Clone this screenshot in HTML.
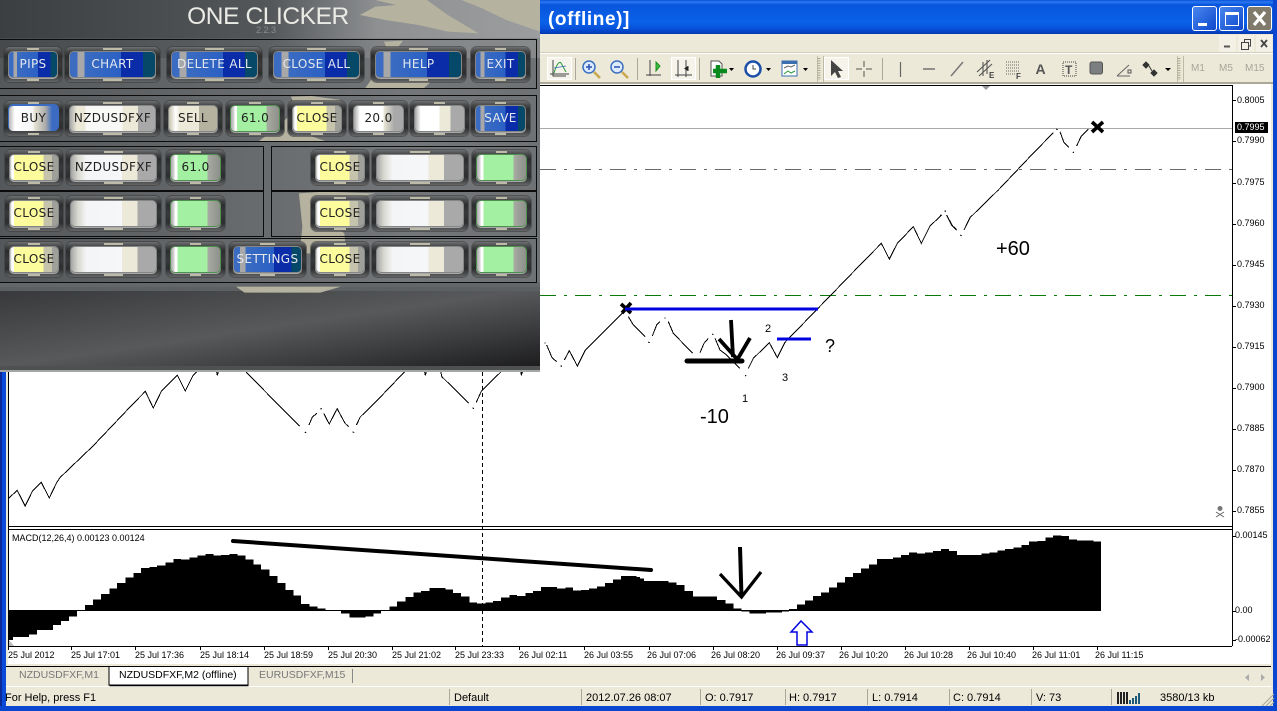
<!DOCTYPE html>
<html><head><meta charset="utf-8"><style>
html,body{margin:0;padding:0;width:1277px;height:711px;overflow:hidden;background:#fff}
body{position:relative;font-family:"Liberation Sans",sans-serif}
div,span{position:absolute;box-sizing:border-box}
#panel{left:0;top:0;width:540px;height:372px;overflow:hidden;background:linear-gradient(90deg,#55585a 0,#65686a 40%,#74777a 75%,#6f7274 100%);border-bottom:2px solid #a5a7a5}
.box{border:1px solid #0c0c0c}
.b{height:35px;border-radius:6px;background:linear-gradient(#6e7071 0,#464849 12%,#2b2d2e 26%,#37393a 50%,#2b2d2e 76%,#484a4b 90%,#646667 100%);box-shadow:0 0 0 1px rgba(60,60,60,.6)}
.b:before,.b:after{content:"";position:absolute;left:40%;width:20%;height:2px;background:#bdbaa8}
.b:before{top:1px}.b:after{bottom:1px}
.i{left:5px;right:5px;top:5px;bottom:5px;border-radius:4px;font:12px/25px "DejaVu Sans",sans-serif;letter-spacing:.35px;text-align:center;color:#222;white-space:nowrap;box-shadow:0 0 0 1px #858787,0 1px 0 1px #a8a8a8}
.blue .i{color:#e4e8ee;background:linear-gradient(90deg,#3b6cc2 0,#3b6cc2 9%,#a8a8a8 9%,#a8a8a8 17%,#3b6cc2 17%,#2b60c4 60%,#0a2ca8 60%,#0a2ca8 86%,#064868 86%)}
.wh .i{background:linear-gradient(90deg,#a5a5a5 0,#d8d8d0 8%,#f4f5f6 18%,#f6f7f8 60%,#ece9d8 60%,#ece9d8 78%,#a9a9a9 78%)}
.yl .i{background:linear-gradient(90deg,#b8b8b0 0,#fff 4%,#fff 8%,#fdfc9c 8%,#fdfc9c 70%,#c6c3ad 70%,#c6c3ad 88%,#a0a09a 88%)}
.gr .i{box-shadow:0 0 0 1px #4f8f4f,0 1px 0 1px #a8a8a8;background:linear-gradient(90deg,#aaa 0,#ddd 7%,#fff 8%,#fff 13%,#a3f0a3 13%,#a3f0a3 74%,#a8aca2 74%,#8e908a 100%)}
.t{font-size:9px;color:#000;white-space:nowrap;line-height:11px}
.s{font-size:11px;color:#000;white-space:nowrap;line-height:13px}
.tb{color:#a6a69a;font-size:10px;line-height:12px;top:63px}
.w{background:#0b56dc;border:1px solid #fff;border-radius:3px}
</style></head><body>

<!-- window chrome -->
<div style="left:540px;top:0;width:737px;height:34px;background:linear-gradient(#0a50d8 0,#2a78f0 6%,#0855dd 14%,#0a5ce4 45%,#0a62ea 65%,#0850d8 85%,#0338b0 100%)"></div>
<div style="left:548px;top:8px;font:bold 19px/24px 'Liberation Sans',sans-serif;letter-spacing:.6px;color:#fff;white-space:nowrap">(offline)]</div>
<div class="w" style="left:1192px;top:6px;width:25px;height:25px;background:linear-gradient(135deg,#4a86ee,#0c48cc)"><span style="left:5px;top:16px;width:9px;height:3px;background:#fff"></span></div>
<div class="w" style="left:1219px;top:6px;width:25px;height:25px;background:linear-gradient(135deg,#4a86ee,#0c48cc)"><span style="left:5px;top:5px;width:14px;height:14px;border:1px solid #fff;border-top:3px solid #fff"></span></div>
<div class="w" style="left:1247px;top:6px;width:25px;height:25px;background:#7f7a6c"><svg style="position:absolute;left:0;top:0" width="23" height="23"><path d="M6 5L17 18M17 5L6 18" stroke="#fff" stroke-width="3.2" fill="none"/></svg></div>

<div style="left:540px;top:34px;width:737px;height:50px;background:#ece9d8"></div>
<div style="left:540px;top:52px;width:737px;height:1px;background:#cfcdbb"></div>
<div style="left:540px;top:53px;width:737px;height:1px;background:#fff"></div>
<div style="left:540px;top:82px;width:737px;height:2px;background:#aca899"></div>
<div style="left:1219px;top:35px;width:17px;height:17px;background:#f3f1e6"></div>
<div style="left:1238px;top:35px;width:16px;height:17px;background:#f3f1e6"></div>
<div style="left:1256px;top:35px;width:16px;height:17px;background:#f3f1e6"></div>

<!-- toggled toolbar buttons -->
<div style="left:547px;top:57px;width:25px;height:23px;background:#f5f3ea;border:1px solid #fff"></div>
<div style="left:671px;top:57px;width:25px;height:23px;background:#f5f3ea;border:1px solid #fff"></div>
<div style="left:824px;top:57px;width:25px;height:23px;background:#f5f3ea;border:1px solid #fff"></div>
<div class="tb" style="left:1191px">M1</div>
<div class="tb" style="left:1219px">M5</div>
<div class="tb" style="left:1245px">M15</div>

<svg style="position:absolute;left:0;top:0" width="1277" height="711">
 <!-- mdi buttons -->
 <path d="M1224 46.500H1230" stroke="#555" stroke-width="2"/>
 <path d="M1241.500 42.500H1248.500V49.500H1241.500ZM1244.500 42V39.500H1250.500V46H1249" fill="none" stroke="#444"/>
 <path d="M1261 40L1267 47M1267 40L1261 47" stroke="#444" stroke-width="1.800" fill="none"/>
 <!-- toolbar separators -->
 <g stroke="#aca899" stroke-width="1">
  <path d="M575.5 58V80M637.5 58V80M699.5 58V80M882.5 58V80"/>
  <path d="M817.5 56V82M823.5 56V82M1177.5 56V82M1183.5 56V82" stroke="#bdbaa9"/>
 </g>
 <path d="M819 58V80M1179 58V80" stroke="#a9a692" stroke-width="3" stroke-dasharray="1 1.4"/>
 <!-- toolbar icons -->
 <path d="M553 60V76H566" stroke="#444" fill="none"/><path d="M550 74H569" stroke="#444"/><path d="M554 73Q558 60 561 63L566 72" stroke="#2a9a3a" fill="none"/><path d="M554 68L566 66" stroke="#3a70c0" stroke-width=".7"/>
 <g fill="#dcebff" stroke="#3b6fc0" stroke-width="1.5"><circle cx="589" cy="67" r="6"/><circle cx="617" cy="67" r="6"/></g>
 <path d="M594 72L600 78M622 72L628 78" stroke="#c9a850" stroke-width="2.6"/>
 <path d="M586 67H592M589 64V70M614 67H620" stroke="#2a50b0" stroke-width="1.5"/>
 <path d="M650 60V76M646 75H661" stroke="#444" fill="none"/><path d="M656 62V71L660 66Z" fill="#3fbf3f" stroke="#1c8a1c"/>
 <path d="M678 60V77M686 60V77M675 75H692" stroke="#444" fill="none"/><path d="M688 66V71" stroke="#222" stroke-width="1"/><path d="M684 68.500L688 66V71Z" fill="#222"/>
 <path d="M711 61H719L722 64V76H711Z" fill="#fff" stroke="#555"/><path d="M713 71H727M718 65V78" stroke="#0a8a1c" stroke-width="4.500"/>
 <circle cx="753" cy="69" r="7.500" fill="#fff" stroke="#1c4fa8" stroke-width="2.500"/><path d="M753 65V69H756" stroke="#444" fill="none"/>
 <rect x="782" y="61" width="15" height="15" fill="#fff" stroke="#3a70b0"/><path d="M782 62.500H797" stroke="#3a70b0" stroke-width="3"/><path d="M784 68L788 66L791 67L795 65" stroke="#666" fill="none"/><path d="M784 74L788 71L791 73L795 71" stroke="#2a9a3a" fill="none"/>
 <path d="M729 68H734L731.500 71Z M766 68H771L768.500 71Z M803 68H808L805.500 71Z M1165 68H1171L1168 71Z"/>
 <path d="M831 60L831 76L835 72L838 78L841 77L838 71L843 71Z" fill="#444"/>
 <path d="M864 61V67M864 71V77M856 69H862M866 69H872" stroke="#555"/>
 <path d="M900.500 62V77" stroke="#666" stroke-width="1.200"/>
 <path d="M923 69H935" stroke="#555" stroke-width="1.200"/>
 <path d="M951 76L963 62" stroke="#777" stroke-width="1.500"/>
 <path d="M977 72L990 60M979 76L992 64M983 62V76M987 60V74" stroke="#555" fill="none" stroke-width="1.100"/>
 <text x="989" y="78" font-size="8" font-weight="bold" fill="#444">E</text>
 <path d="M1006 62H1019M1006 65H1019M1006 68H1019M1006 71H1019M1006 74H1016" stroke="#666" stroke-dasharray="1 1"/>
 <text x="1016" y="79" font-size="8" font-weight="bold" fill="#444">F</text>
 <text x="1035.500" y="74" font-size="14" font-weight="bold" fill="#555">A</text>
 <rect x="1063" y="62" width="13" height="14" fill="none" stroke="#444" stroke-dasharray="1 1"/>
 <text x="1065" y="74" font-size="12" font-weight="bold" fill="#555">T</text>
 <rect x="1090" y="62" width="12.500" height="12" rx="2" fill="#7b7f82" stroke="#555"/>
 <path d="M1117 76H1130M1117 76L1129 65" stroke="#666" fill="none"/><rect x="1128" y="70" width="3" height="3" fill="none" stroke="#555"/>
 <path d="M1146 62L1149 65L1146 68L1143 65ZM1154 70L1157 73L1154 76L1151 73ZM1149 66L1152 71" fill="#333" stroke="#333"/>
 <path d="M981 85H991L986 90Z" fill="#9a9a9a"/>

 <!-- chart frame -->
 <rect x="0" y="372" width="6" height="339" fill="#0a4ad8"/><rect x="0" y="372" width="2" height="339" fill="#0a2a9a"/>
 <rect x="6" y="372" width="2" height="339" fill="#ece9d8"/>
 <rect x="1271" y="84" width="2" height="627" fill="#ece9d8"/>
 <rect x="1273" y="0" width="4" height="711" fill="#0a46d0"/>
 <rect x="540" y="85" width="692" height="1" fill="#000"/>
 <rect x="1232" y="85" width="1" height="561" fill="#000"/>
 <rect x="8" y="372" width="1" height="274" fill="#000"/>
 <rect x="8" y="526" width="1224" height="1" fill="#000"/>
 <rect x="8" y="529" width="1224" height="1" fill="#000"/>
 <rect x="8" y="646" width="1224" height="1" fill="#000"/>

 <!-- level lines -->
 <rect x="540" y="128" width="692" height="1" fill="#a8a8a8"/>
 <path d="M540 169.500H1232" stroke="#6a6a6a" stroke-dasharray="16 8 3 8"/>
 <path d="M540 295.500H1232" stroke="#0a7a0a" stroke-dasharray="16 8 3 8"/>
 <path d="M482.500 372V646" stroke="#000" stroke-dasharray="4 3"/>

 <!-- price line, lower left -->
 <g fill="none" stroke="#000" shape-rendering="crispEdges">
 <g transform="translate(0,370) scale(.34439,.33333)">
  <polyline vector-effect="non-scaling-stroke" points="25,385 50,361 73,408 95,362 120,337 143,384 165,337 175,322 270,228 385,103 422,64 445,114 469,63 515,16 538,63 560,17 571,5"/>
  <polyline vector-effect="non-scaling-stroke" points="629,5 631,16 634,5"/>
  <polyline vector-effect="non-scaling-stroke" points="714,5 800,96 870,168"/>
  <polyline vector-effect="non-scaling-stroke" points="885,186 889,188"/>
  <polyline vector-effect="non-scaling-stroke" points="897,165 907,141 920,130"/>
  <polyline vector-effect="non-scaling-stroke" points="930,117 935,116"/>
  <polyline vector-effect="non-scaling-stroke" points="940,130 956,162 979,116 1002,160 1012,170"/>
  <polyline vector-effect="non-scaling-stroke" points="1024,185 1028,188"/>
  <polyline vector-effect="non-scaling-stroke" points="1035,165 1046,141 1087,100 1175,5"/>
  <polyline vector-effect="non-scaling-stroke" points="1233,5 1235,16 1238,5"/>
  <polyline vector-effect="non-scaling-stroke" points="1280,5 1283,20 1362,100"/>
  <polyline vector-effect="non-scaling-stroke" points="1372,113 1376,116"/>
  <polyline vector-effect="non-scaling-stroke" points="1383,97 1398,63 1455,5"/>
  <polyline vector-effect="non-scaling-stroke" points="1512,5 1514,16 1517,5"/>
 </g>
 <!-- price line, middle (zoom 4 coords) -->
 <g transform="translate(540,90) scale(.33333)">
  <polyline vector-effect="non-scaling-stroke" points="13,758 17,760"/>
  <polyline vector-effect="non-scaling-stroke" points="20,765 36,803 50,815"/>
  <polyline vector-effect="non-scaling-stroke" points="62,827 66,829"/>
  <polyline vector-effect="non-scaling-stroke" points="73,810 88,782 112,828 135,782 172,745 250,667"/>
  <polyline vector-effect="non-scaling-stroke" points="265,680 280,705 315,740"/>
  <polyline vector-effect="non-scaling-stroke" points="325,756 329,758"/>
  <polyline vector-effect="non-scaling-stroke" points="337,738 350,705 360,695"/>
  <polyline vector-effect="non-scaling-stroke" points="373,683 377,685"/>
  <polyline vector-effect="non-scaling-stroke" points="385,695 400,730 458,790"/>
  <polyline vector-effect="non-scaling-stroke" points="480,788 492,760 505,745"/>
  <polyline vector-effect="non-scaling-stroke" points="516,732 520,734"/>
  <polyline vector-effect="non-scaling-stroke" points="525,745 540,780 560,795 600,835"/>
  <polyline vector-effect="non-scaling-stroke" points="615,856 619,858"/>
  <polyline vector-effect="non-scaling-stroke" points="625,835 640,805 688,758 712,803 735,757 870,618 965,520 1024,460 1048,507 1072,460 1120,410 1144,460 1170,408 1205,375"/>
  <polyline vector-effect="non-scaling-stroke" points="1214,362 1218,364"/>
  <polyline vector-effect="non-scaling-stroke" points="1225,385 1238,408 1250,418"/>
 </g>
 <!-- price line, right (zoom 5 coords) -->
 <g transform="translate(940,90) scale(.33333)">
  <polyline vector-effect="non-scaling-stroke" points="0,375 4,377"/>
  <polyline vector-effect="non-scaling-stroke" points="13,362 17,364"/>
  <polyline vector-effect="non-scaling-stroke" points="20,375 36,407 50,420"/>
  <polyline vector-effect="non-scaling-stroke" points="61,435 65,437"/>
  <polyline vector-effect="non-scaling-stroke" points="72,420 90,383 175,300 268,202 340,128"/>
  <polyline vector-effect="non-scaling-stroke" points="349,117 353,119"/>
  <polyline vector-effect="non-scaling-stroke" points="360,125 372,158 387,172"/>
  <polyline vector-effect="non-scaling-stroke" points="398,186 402,188"/>
  <polyline vector-effect="non-scaling-stroke" points="410,168 423,140 445,118"/>
 </g>
 </g>

 <!-- hand drawn -->
 <path d="M621 304L631 313M631 303L622 313" stroke="#000" stroke-width="3.600" fill="none"/>
 <path d="M1092 122L1103 132M1103 122L1092 132" stroke="#000" stroke-width="3.600" fill="none"/>
 <path d="M625 309H818" stroke="#0000e0" stroke-width="3"/>
 <path d="M777 339H811" stroke="#0000e0" stroke-width="3"/>
 <path d="M687 361H742" stroke="#000" stroke-width="5" stroke-linecap="round"/>
 <path d="M731 320L733 357M719 339L737 359M750 338L737 360" stroke="#000" stroke-width="3.800" fill="none"/>
 <path d="M233 541L651 570" stroke="#000" stroke-width="4" stroke-linecap="round"/>
 <path d="M740 547L741.500 597" stroke="#000" stroke-width="4"/>
 <path d="M720 574L741.500 597L761 572" stroke="#000" stroke-width="3.200" fill="none"/>

 <!-- MACD -->
 <rect x="8" y="610" width="1093" height="1" fill="#000"/>
 <g transform="translate(0,525) scale(.40816,.33333)" shape-rendering="crispEdges">
 <path d="M20,258V345H32V336H71V328H91V315H130V300H150V288H169V275H189V258H208V240H228V224H248V207H268V190H287V174H307V158H327V144H346V129H366V126H385V122H405V113H425V102H444V103H464V97H484V91H503V87H523V92H542V90H562V87H582V92H602V104H621V118H640V133H660V153H680V174H699V195H719V212H738V237H758V244H778V250H797V258H836V266H856V277H895V275H915V266H934V258H954V244H973V229H993V216H1013V202H1032V198H1052V189H1091V193H1110V204H1130V214H1150V232H1169V235H1189V232H1208V228H1228V218H1248V210H1267V213H1287V204H1306V198H1326V186H1365V190H1385V188H1404V197H1424V195H1443V190H1463V185H1482V174H1502V163H1521V153H1560V156H1568V258Z"/>
 </g>
 <g transform="translate(640,525) scale(.40625,.33333)" shape-rendering="crispEdges">
 <path d="M0,258V160H10V168H70V172H90V180H110V198H130V214H190V225H210V235H230V250H250V260H270V266H310V262H350V260H367V252H386V238H406V226H426V213H445V202H465V187H485V172H505V156H524V144H544V130H564V118H583V102H623V97H642V90H662V83H682V85H701V83H721V78H741V72H760V78H780V90H840V86H860V82H880V77H899V72H919V67H939V60H958V50H978V48H998V38H1017V31H1037V33H1056V44H1076V47H1116V50H1135V258Z"/>
 </g>
 <path d="M801 621L791 632H797V645H807V632H812Z" fill="#fff" stroke="#0000e0" stroke-width="1.500"/>
 <path d="M9 646L9 640L14 646Z" fill="#bbb"/>

 <!-- price axis ticks -->
 <path d="M1232 100.500H1236M1232 141.500H1236M1232 183.500H1236M1232 224.500H1236M1232 265.500H1236M1232 306.500H1236M1232 347.500H1236M1232 388.500H1236M1232 429.500H1236M1232 470.500H1236M1232 511.500H1236M1232 536.500H1236M1232 611.500H1236M1232 640.500H1236" stroke="#000"/>
 <!-- time ticks -->
 <path d="M8.500 646V650M71.500 646V650M135.500 646V650M200.500 646V650M264.500 646V650M328.500 646V650M392.500 646V650M455.500 646V650M519.500 646V650M584.500 646V650M649.500 646V650M713.500 646V650M777.500 646V650M841.500 646V650M905.500 646V650M969.500 646V650M1033.500 646V650M1097.500 646V650" stroke="#000"/>
 <!-- skull -->
 <circle cx="1220" cy="508.500" r="2.500" fill="#777"/><path d="M1216 512L1224 517M1224 512L1216 517" stroke="#666" fill="none"/>

 <!-- beige bottom -->
 <rect x="8" y="664" width="1263" height="2" fill="#ece9d8"/>
 <rect x="6" y="666" width="1265" height="40" fill="#ece9d8"/>
 <rect x="6" y="666" width="1265" height="1" fill="#000"/>
 <rect x="6" y="686" width="1265" height="1" fill="#fff"/>
 <rect x="0" y="706" width="1277" height="5" fill="#0a46d0"/>
 <path d="M109 667V685H248V667" fill="#fff" stroke="#000"/>
 <path d="M109.500 685.500H248.500" stroke="#000" stroke-width="1.500"/>
 <path d="M352.500 669V683" stroke="#888"/>
 <path d="M1249 674V681L1245 677.500ZM1261 674V681L1265 677.500Z" fill="#aaa"/>
 <!-- status separators -->
 <path d="M449.500 689V705M581.500 689V705M700.500 689V705M785.500 689V705M867.500 689V705M949.500 689V705M1031.500 689V705M1111.500 689V705" stroke="#aca899"/>
 <!-- connection bars -->
 <g shape-rendering="crispEdges">
  <path d="M1117 692H1119V704H1117ZM1120 692H1122V704H1120ZM1123 692H1125V704H1123ZM1126 692H1128V704H1126Z" fill="#222"/>
  <path d="M1129 700H1131V704H1129ZM1132 698H1134V704H1132ZM1135 696H1137V704H1135ZM1138 693H1140V704H1138Z" fill="#1c5a7a"/>
 </g>
 <path d="M1274 694L1262 706M1274 698L1266 706M1274 702L1270 706" stroke="#a8a595" fill="none"/>
</svg>

<!-- axis labels -->
<div class="t" style="left:1237px;top:95px">0.8005</div>
<div style="left:1235px;top:122px;width:33px;height:11px;background:#000"></div>
<div class="t" style="left:1237px;top:122px;color:#fff">0.7995</div>
<div class="t" style="left:1237px;top:135px">0.7990</div>
<div class="t" style="left:1237px;top:177px">0.7975</div>
<div class="t" style="left:1237px;top:218px">0.7960</div>
<div class="t" style="left:1237px;top:259px">0.7945</div>
<div class="t" style="left:1237px;top:300px">0.7930</div>
<div class="t" style="left:1237px;top:341px">0.7915</div>
<div class="t" style="left:1237px;top:382px">0.7900</div>
<div class="t" style="left:1237px;top:423px">0.7885</div>
<div class="t" style="left:1237px;top:464px">0.7870</div>
<div class="t" style="left:1237px;top:505px">0.7855</div>
<div class="t" style="left:1235px;top:530px">0.00145</div>
<div class="t" style="left:1235px;top:605px">0.00</div>
<div class="t" style="left:1235px;top:634px">-0.00062</div>

<!-- annotations -->
<div class="t" style="left:12px;top:533px">MACD(12,26,4) 0.00123 0.00124</div>
<div style="left:700px;top:406px;font-size:20px;line-height:23px">-10</div>
<div style="left:996px;top:238px;font-size:20px;line-height:23px">+60</div>
<div style="left:825px;top:336px;font-size:18px;line-height:20px">?</div>
<div class="s" style="left:765px;top:323px">2</div>
<div class="s" style="left:782px;top:372px">3</div>
<div class="s" style="left:742px;top:393px">1</div>

<!-- time labels -->
<div class="t" style="left:8px;top:650px">25 Jul 2012</div>
<div class="t" style="left:71px;top:650px">25 Jul 17:01</div>
<div class="t" style="left:135px;top:650px">25 Jul 17:36</div>
<div class="t" style="left:200px;top:650px">25 Jul 18:14</div>
<div class="t" style="left:264px;top:650px">25 Jul 18:59</div>
<div class="t" style="left:328px;top:650px">25 Jul 20:30</div>
<div class="t" style="left:392px;top:650px">25 Jul 21:02</div>
<div class="t" style="left:455px;top:650px">25 Jul 23:33</div>
<div class="t" style="left:519px;top:650px">26 Jul 02:11</div>
<div class="t" style="left:584px;top:650px">26 Jul 03:55</div>
<div class="t" style="left:647px;top:650px">26 Jul 07:06</div>
<div class="t" style="left:711px;top:650px">26 Jul 08:20</div>
<div class="t" style="left:776px;top:650px">26 Jul 09:37</div>
<div class="t" style="left:839px;top:650px">26 Jul 10:20</div>
<div class="t" style="left:904px;top:650px">26 Jul 10:28</div>
<div class="t" style="left:967px;top:650px">26 Jul 10:40</div>
<div class="t" style="left:1032px;top:650px">26 Jul 11:01</div>
<div class="t" style="left:1095px;top:650px">26 Jul 11:15</div>

<!-- tabs / status -->
<div class="s" style="left:19px;top:669px;color:#777;font-size:10.500px">NZDUSDFXF,M1</div>
<div class="s" style="left:119px;top:669px;font-size:10.500px">NZDUSDFXF,M2 (offline)</div>
<div class="s" style="left:259px;top:669px;color:#777;font-size:10.500px">EURUSDFXF,M15</div>
<div class="s" style="left:5px;top:692px">For Help, press F1</div>
<div class="s" style="left:454px;top:692px">Default</div>
<div class="s" style="left:586px;top:692px">2012.07.26 08:07</div>
<div class="s" style="left:705px;top:692px">O: 0.7917</div>
<div class="s" style="left:789px;top:692px">H: 0.7917</div>
<div class="s" style="left:872px;top:692px">L: 0.7914</div>
<div class="s" style="left:953px;top:692px">C: 0.7914</div>
<div class="s" style="left:1036px;top:692px">V: 73</div>
<div class="s" style="left:1160px;top:692px">3580/13 kb</div>

<!-- ONE CLICKER panel -->
<div id="panel">
 <svg style="position:absolute;left:0;top:0" width="540" height="370">
  <defs>
   <linearGradient id="top" x1="0" x2="1" y1="0" y2="0"><stop offset="0" stop-color="#3c3f41"/><stop offset=".5" stop-color="#54575a"/><stop offset=".7" stop-color="#8e9092"/><stop offset="1" stop-color="#9b9d9e"/></linearGradient>
   <linearGradient id="bot" x1="0" x2="1" y1="0" y2="1"><stop offset="0" stop-color="#38393b"/><stop offset=".48" stop-color="#58595b"/><stop offset=".72" stop-color="#3c3d3f"/><stop offset="1" stop-color="#1a1a1b"/></linearGradient>
  </defs>
  <rect width="540" height="38" fill="url(#top)"/>
  <rect y="38" width="540" height="20" fill="url(#top)" opacity=".55"/>
  <rect y="282" width="540" height="5" fill="#63676a"/>
  <rect y="291" width="540" height="79" fill="url(#bot)"/>
  <rect y="287" width="540" height="4" fill="#5c6062"/>
  <rect y="366" width="540" height="4" fill="#4e5052"/>
  <g transform="scale(.34439,.33333)" fill="#b5b2a0">
   <polygon points="1045,45 1090,20 1150,15 1090,0 1240,0 1300,45 1390,100 1300,95 1215,75 1130,62"/>
   <polygon points="1340,0 1568,0 1568,95 1470,60 1400,25"/>
   <polygon points="1115,125 1170,122 1150,150 1240,140 1300,200 1230,265 1060,265 1095,215 1140,190"/>
   <polygon points="845,290 905,288 990,300 880,400 950,425 750,425 800,385 860,330"/>
   <polygon points="868,580 940,575 1090,580 1000,600 935,650 1000,700 1005,760 870,760 878,680"/>
   <polygon points="685,860 990,860 930,878 710,878"/>
  </g>
 </svg>
 <div style="left:2px;top:4px;width:532px;text-align:center;font:24.500px/26px 'Liberation Sans',sans-serif;color:#ebebe6;letter-spacing:-.4px">ONE CLICKER</div>
 <div style="left:0;top:25px;width:532px;text-align:center;font:9px/11px 'Liberation Sans',sans-serif;color:#8a8c8e">2.2.3</div>

 <div class="box" style="left:-2px;top:39px;width:539px;height:50px"></div>
 <div class="box" style="left:-2px;top:95px;width:539px;height:47px"></div>
 <div class="box" style="left:-2px;top:146px;width:266px;height:45px"></div>
 <div class="box" style="left:271px;top:146px;width:266px;height:45px"></div>
 <div class="box" style="left:-2px;top:191px;width:266px;height:46px"></div>
 <div class="box" style="left:271px;top:191px;width:266px;height:46px"></div>
 <div class="box" style="left:-2px;top:238px;width:539px;height:45px"></div>

 <div class="b blue" style="left:4px;top:47px;width:58px"><div class="i">PIPS</div></div>
 <div class="b blue" style="left:65px;top:47px;width:95px"><div class="i">CHART</div></div>
 <div class="b blue" style="left:167px;top:47px;width:95px"><div class="i">DELETE ALL</div></div>
 <div class="b blue" style="left:269px;top:47px;width:95px"><div class="i">CLOSE ALL</div></div>
 <div class="b blue" style="left:371px;top:47px;width:95px"><div class="i">HELP</div></div>
 <div class="b blue" style="left:471px;top:47px;width:59px"><div class="i">EXIT</div></div>

 <div class="b wh" style="left:4px;top:101px;width:59px"><div class="i" style="background:linear-gradient(90deg,#b5b5b5 0,#fff 12%,#f4f5f6 50%,#ece9d8 50%,#a9a9a9 75%,#3b6cc2 88%);box-shadow:0 -1px 0 1px #3b6cc2">BUY</div></div>
 <div class="b wh" style="left:65px;top:101px;width:95px"><div class="i" style="background:linear-gradient(90deg,#a9a9a9 0,#ece9d8 8%,#ece9d8 18%,#f8f8f6 18%,#f8f8f6 62%,#ece9d8 62%,#ece9d8 80%,#a9a9a9 80%)">NZDUSDFXF</div></div>
 <div class="b wh" style="left:164px;top:101px;width:58px"><div class="i" style="background:linear-gradient(90deg,#c6c3ad 0,#fff 14%,#ece9d8 22%,#ece9d8 62%,#b5b2a0 62%)">SELL</div></div>
 <div class="b gr" style="left:226px;top:101px;width:58px"><div class="i">61.0</div></div>
 <div class="b yl" style="left:288px;top:101px;width:58px"><div class="i">CLOSE</div></div>
 <div class="b wh" style="left:349px;top:101px;width:59px"><div class="i" style="background:linear-gradient(90deg,#a5a5a5 0,#fff 12%,#fff 60%,#ece9d8 60%,#a9a9a9 82%)">20.0</div></div>
 <div class="b wh" style="left:410px;top:101px;width:59px"><div class="i" style="background:linear-gradient(90deg,#a5a5a5 0,#fff 12%,#fff 50%,#ece9d8 50%,#ece9d8 72%,#a9a9a9 72%)"></div></div>
 <div class="b blue" style="left:471px;top:101px;width:59px"><div class="i">SAVE</div></div>

 <div class="b yl" style="left:5px;top:150px;width:58px"><div class="i">CLOSE</div></div>
 <div class="b wh" style="left:66px;top:150px;width:95px"><div class="i">NZDUSDFXF</div></div>
 <div class="b gr" style="left:166px;top:150px;width:59px"><div class="i">61.0</div></div>
 <div class="b yl" style="left:311px;top:150px;width:58px"><div class="i">CLOSE</div></div>
 <div class="b wh" style="left:372px;top:150px;width:96px"><div class="i"></div></div>
 <div class="b gr" style="left:472px;top:150px;width:59px"><div class="i"></div></div>

 <div class="b yl" style="left:5px;top:196px;width:58px"><div class="i">CLOSE</div></div>
 <div class="b wh" style="left:66px;top:196px;width:95px"><div class="i"></div></div>
 <div class="b gr" style="left:166px;top:196px;width:59px"><div class="i"></div></div>
 <div class="b yl" style="left:311px;top:196px;width:58px"><div class="i">CLOSE</div></div>
 <div class="b wh" style="left:372px;top:196px;width:96px"><div class="i"></div></div>
 <div class="b gr" style="left:472px;top:196px;width:59px"><div class="i"></div></div>

 <div class="b yl" style="left:5px;top:242px;width:58px"><div class="i">CLOSE</div></div>
 <div class="b wh" style="left:66px;top:242px;width:95px"><div class="i"></div></div>
 <div class="b gr" style="left:166px;top:242px;width:59px"><div class="i"></div></div>
 <div class="b blue" style="left:229px;top:242px;width:77px"><div class="i">SETTINGS</div></div>
 <div class="b yl" style="left:311px;top:242px;width:58px"><div class="i">CLOSE</div></div>
 <div class="b wh" style="left:372px;top:242px;width:96px"><div class="i"></div></div>
 <div class="b gr" style="left:472px;top:242px;width:59px"><div class="i"></div></div>
</div>
</body></html>
